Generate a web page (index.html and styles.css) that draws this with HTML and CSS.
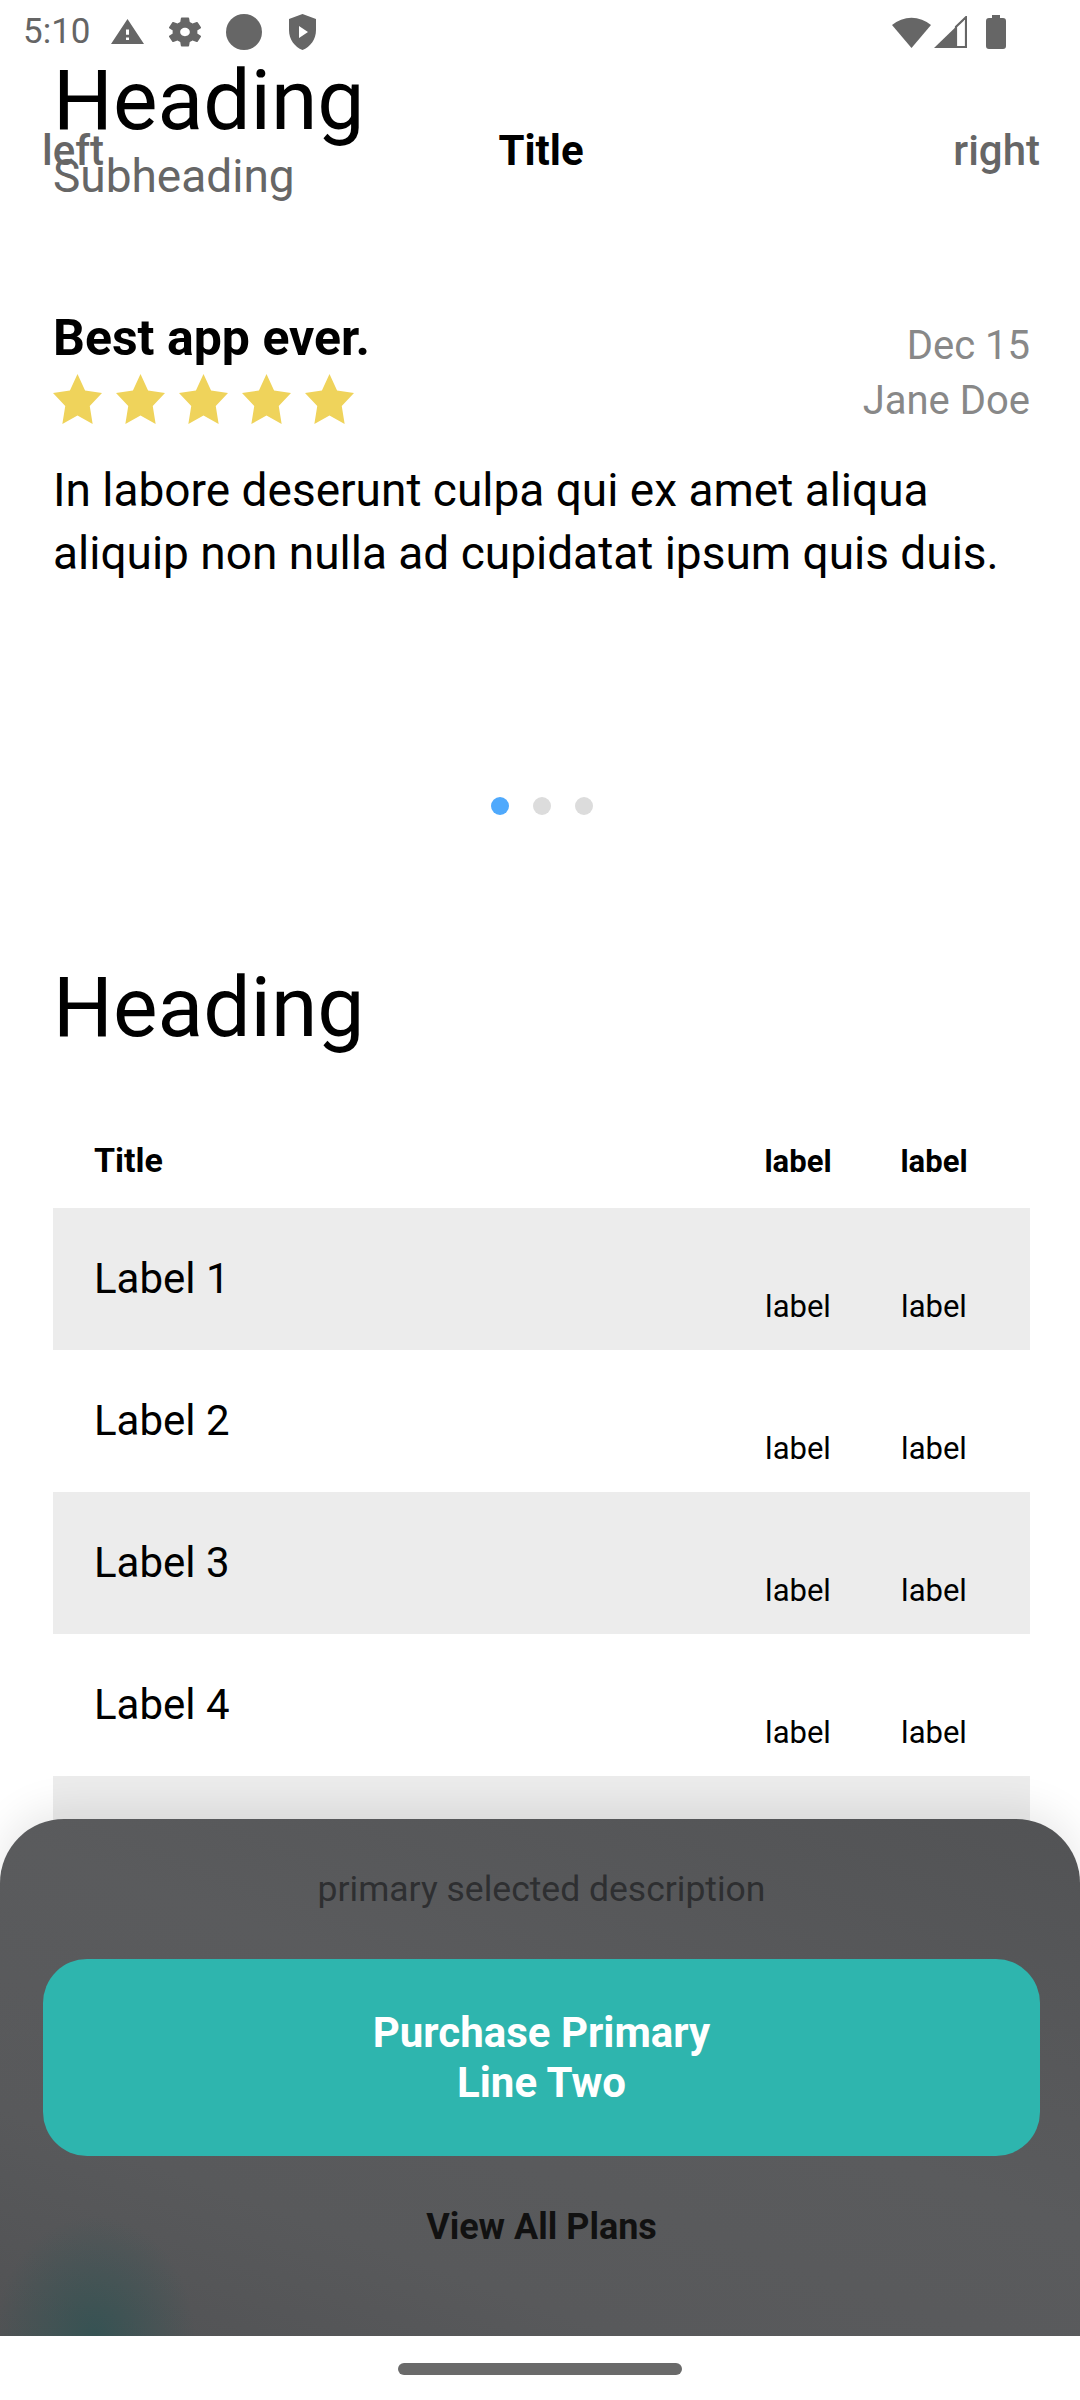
FILE: index.html
```html
<!DOCTYPE html>
<html lang="en">
<head>
<meta charset="utf-8">
<title>Review</title>
<link rel="stylesheet" href="styles.css">
</head>
<body>
<div class="screen">
  <div class="statusbar">
    <span class="time">5:10</span>
    <svg class="ic ic-warn" viewBox="1 2 22 19" preserveAspectRatio="none"><path fill-rule="evenodd" d="M1 21h22L12 2 1 21zm12-3h-2v-2h2v2zm0-4h-2v-4h2v4z"/></svg>
    <svg class="ic ic-gear" viewBox="2.7 2 18.6 20" preserveAspectRatio="none"><path d="M19.14 12.94c.04-.3.06-.61.06-.94 0-.32-.02-.64-.07-.94l2.03-1.58a.49.49 0 0 0 .12-.61l-1.920-3.32a.488.488 0 0 0-.59-.22l-2.39.96c-.5-.38-1.03-.7-1.62-.94l-.36-2.54a.484.484 0 0 0-.48-.41h-3.84c-.24 0-.43.17-.47.41l-.36 2.54c-.59.24-1.13.57-1.62.94l-2.39-.96c-.22-.08-.47 0-.59.22L2.74 8.87c-.12.21-.08.47.12.61l2.03 1.58c-.05.3-.09.63-.09.94s.02.64.07.94l-2.03 1.58a.49.49 0 0 0-.12.61l1.92 3.32c.12.22.37.29.59.22l2.39-.96c.5.38 1.03.7 1.62.94l.36 2.54c.05.24.24.41.48.41h3.84c.24 0 .44-.17.47-.41l.36-2.54c.59-.24 1.13-.56 1.62-.94l2.39.96c.22.08.47 0 .59-.22l1.92-3.32c.12-.22.07-.47-.12-.61l-2.01-1.58zM12 14.8c-1.55 0-2.8-1.25-2.8-2.8s1.25-2.8 2.8-2.8 2.8 1.25 2.8 2.8-1.25 2.8-2.8 2.8z"/></svg>
    <span class="ic-dot"></span>
    <svg class="ic ic-shield" viewBox="0 0 27 36"><path fill-rule="evenodd" d="M13.5 0L27 5v11c0 9.5-5.8 17-13.5 20C5.8 33 0 25.5 0 16V5zM10 12v12l9-6z"/></svg>
    <span class="spacer"></span>
    <svg class="ic ic-wifi" viewBox="0 0 39 32"><path d="M19.5 32L0 9A30.2 30.2 0 0 1 39 9z"/></svg>
    <svg class="ic ic-signal" viewBox="0 0 33 32"><path d="M0 32L22 10.7V32z"/><path class="outline" d="M22 10.7L32 1.2V31H22z"/></svg>
    <svg class="ic ic-battery" viewBox="0 0 20 34"><path d="M6 0h8v3h3a3 3 0 0 1 3 3v25a3 3 0 0 1-3 3H3a3 3 0 0 1-3-3V6a3 3 0 0 1 3-3h3z"/></svg>
  </div>

  <div class="content">
    <header class="hero">
      <h1 class="hero-title">Heading</h1>
      <p class="hero-sub">Subheading</p>
    </header>

    <section class="review">
      <div class="review-top">
        <div class="review-main">
          <h2 class="review-title">Best app ever.</h2>
          <div class="stars">
            <svg class="star" viewBox="2 2 20 19.02" preserveAspectRatio="none"><polygon points="12,2 15.09,8.26 22,9.27 17,14.14 18.18,21.02 12,17.77 5.82,21.02 7,14.14 2,9.27 8.91,8.26"/></svg>
            <svg class="star" viewBox="2 2 20 19.02" preserveAspectRatio="none"><polygon points="12,2 15.09,8.26 22,9.27 17,14.14 18.18,21.02 12,17.77 5.82,21.02 7,14.14 2,9.27 8.91,8.26"/></svg>
            <svg class="star" viewBox="2 2 20 19.02" preserveAspectRatio="none"><polygon points="12,2 15.09,8.26 22,9.27 17,14.14 18.18,21.02 12,17.77 5.82,21.02 7,14.14 2,9.27 8.91,8.26"/></svg>
            <svg class="star" viewBox="2 2 20 19.02" preserveAspectRatio="none"><polygon points="12,2 15.09,8.26 22,9.27 17,14.14 18.18,21.02 12,17.77 5.82,21.02 7,14.14 2,9.27 8.91,8.26"/></svg>
            <svg class="star" viewBox="2 2 20 19.02" preserveAspectRatio="none"><polygon points="12,2 15.09,8.26 22,9.27 17,14.14 18.18,21.02 12,17.77 5.82,21.02 7,14.14 2,9.27 8.91,8.26"/></svg>
          </div>
        </div>
        <div class="review-meta">
          <div>Dec 15</div>
          <div>Jane Doe</div>
        </div>
      </div>
      <p class="review-body">In labore deserunt culpa qui ex amet aliqua aliquip non nulla ad cupidatat ipsum quis duis.</p>
    </section>

    <div class="dots">
      <span class="dot active"></span>
      <span class="dot"></span>
      <span class="dot"></span>
    </div>

    <h2 class="section-title">Heading</h2>

    <div class="table">
      <div class="thead">
        <span class="th-title">Title</span>
        <span class="th-label">label</span>
        <span class="th-label">label</span>
      </div>
      <div class="tr shaded">
        <span class="td-title">Label 1</span>
        <span class="td-label">label</span>
        <span class="td-label">label</span>
      </div>
      <div class="tr">
        <span class="td-title">Label 2</span>
        <span class="td-label">label</span>
        <span class="td-label">label</span>
      </div>
      <div class="tr shaded">
        <span class="td-title">Label 3</span>
        <span class="td-label">label</span>
        <span class="td-label">label</span>
      </div>
      <div class="tr">
        <span class="td-title">Label 4</span>
        <span class="td-label">label</span>
        <span class="td-label">label</span>
      </div>
      <div class="tr shaded">
        <span class="td-title">Label 5</span>
        <span class="td-label">label</span>
        <span class="td-label">label</span>
      </div>
      <div class="tr">
        <span class="td-title">Label 6</span>
        <span class="td-label">label</span>
        <span class="td-label">label</span>
      </div>
    </div>
  </div>

  <div class="toolbar">
    <span class="tb-side">left</span>
    <span class="tb-title">Title</span>
    <span class="tb-side tb-right">right</span>
  </div>

  <div class="sheet">
    <p class="sheet-desc">primary selected description</p>
    <button class="primary-btn">Purchase Primary<br>Line Two</button>
    <button class="link-btn">View All Plans</button>
  </div>

  <div class="navbar"><span class="handle"></span></div>
</div>
</body>
</html>
```

FILE: styles.css
```css
* { box-sizing: border-box; }
html, body { margin: 0; padding: 0; background: #fff; }
body { font-family: Roboto, "Noto Sans", "Liberation Sans", sans-serif; color: #000; }

.screen {
  position: relative;
  width: 1080px;
  height: 2400px;
  overflow: hidden;
  background: #fff;
}

/* status bar */
.statusbar {
  display: flex;
  align-items: center;
  height: 59px;
  padding: 4px 74px 0 23px;
  color: #666;
}
.time { font-size: 35px; line-height: 35px; color: #656565; }
.ic { display: block; fill: #666; }
.ic-warn { width: 33px; height: 25px; margin-left: 20px; }
.ic-gear { width: 32px; height: 30px; margin-left: 25px; }
.ic-dot { display: block; width: 36px; height: 36px; border-radius: 50%; background: #666; margin-left: 25px; }
.ic-shield { width: 27px; height: 36px; margin-left: 27px; }
.spacer { flex: 1; }
.ic-wifi { width: 39px; height: 32px; }
.ic-signal { width: 33px; height: 32px; margin-left: 3px; }
.ic-signal .outline { fill: none; stroke: #666; stroke-width: 2.2; }
.ic-battery { width: 20px; height: 34px; margin-left: 19px; }

/* content */
.content { padding: 0 50px 0 53px; }

.hero-title {
  margin: 0;
  font-size: 84px;
  line-height: 84px;
  font-weight: 400;
}
.hero-sub {
  margin: 10px 0 0;
  font-size: 46px;
  line-height: 46px;
  color: #666;
}

/* toolbar overlay */
.toolbar {
  position: absolute;
  top: 130px;
  left: 42px;
  right: 40px;
  display: grid;
  grid-template-columns: 1fr auto 1fr;
  align-items: baseline;
  line-height: 42px;
}
.tb-side { font-size: 42px; font-weight: 500; color: #666; }
.tb-right { text-align: right; }
.tb-title { font-size: 42px; font-weight: 700; color: #000; }

/* review */
.review { margin-top: 111px; }
.review-top { display: flex; justify-content: space-between; align-items: flex-start; }
.review-title { margin: 0; font-size: 50px; line-height: 56px; font-weight: 700; }
.stars { display: flex; gap: 14px; margin: 8px 0 0; }
.star { display: block; width: 49px; height: 50px; fill: #efd35b; }
.review-meta {
  margin-top: 8px;
  text-align: right;
  font-size: 40px;
  line-height: 55px;
  color: #888;
}
.review-body {
  margin: 31px 0 0;
  font-size: 46px;
  line-height: 63px;
}

/* pager dots */
.dots {
  display: flex;
  justify-content: center;
  gap: 24px;
  margin-top: 212px;
}
.dot { width: 18px; height: 18px; border-radius: 50%; background: #dcdcdc; }
.dot.active { background: #4fa9fc; }

.section-title {
  margin: 151px 0 0;
  font-size: 84px;
  line-height: 84px;
  font-weight: 400;
}

/* table */
.thead, .tr {
  display: grid;
  grid-template-columns: 1fr 136px 136px;
  padding: 0 28px 0 41px;
}
.thead {
  height: 158px;
  align-items: end;
  padding-bottom: 31px;
}
.th-title { font-size: 34px; line-height: 34px; font-weight: 700; }
.th-label { font-size: 31px; line-height: 31px; font-weight: 700; text-align: center; }
.tr {
  height: 142px;
  align-items: start;
  padding-top: 50px;
}
.tr.shaded { background: #ececec; }
.td-title { font-size: 42px; line-height: 42px; }
.td-label { font-size: 31px; line-height: 31px; text-align: center; margin-top: 33px; }

/* bottom sheet */
.sheet {
  position: absolute;
  left: 0;
  right: 0;
  top: 1819px;
  height: 517px;
  border-radius: 64px 64px 0 0;
  background:
    radial-gradient(ellipse 100px 120px at 95px 100%, rgba(42, 82, 82, 0.7), rgba(42, 82, 82, 0) 100%),
    linear-gradient(200deg, #525355 0%, #5a5b5d 45%, #58595b 75%, #515254 100%);
  box-shadow: 0 -10px 40px rgba(0, 0, 0, 0.09);
  display: flex;
  flex-direction: column;
  align-items: stretch;
  padding: 53px 40px 0 43px;
}
.sheet-desc {
  margin: 0;
  text-align: center;
  font-size: 35.5px;
  line-height: 35px;
  color: #2e2f31;
}
.primary-btn {
  margin-top: 52px;
  height: 197px;
  border: 0;
  border-radius: 44px;
  background: #2eb5ae;
  color: #fff;
  font-family: Roboto, "Noto Sans", "Liberation Sans", sans-serif;
  font-size: 42px;
  line-height: 50px;
  font-weight: 700;
  text-align: center;
  padding: 0;
}
.link-btn {
  margin-top: 53px;
  border: 0;
  background: transparent;
  padding: 0;
  font-family: Roboto, "Noto Sans", "Liberation Sans", sans-serif;
  font-size: 36px;
  line-height: 36px;
  font-weight: 700;
  color: #111;
  text-align: center;
}

/* nav bar */
.navbar {
  position: absolute;
  left: 0;
  right: 0;
  bottom: 0;
  height: 64px;
  background: #fff;
  display: flex;
  justify-content: center;
  padding-top: 27px;
}
.handle { width: 284px; height: 12px; border-radius: 6px; background: #6a6a6a; }
```
